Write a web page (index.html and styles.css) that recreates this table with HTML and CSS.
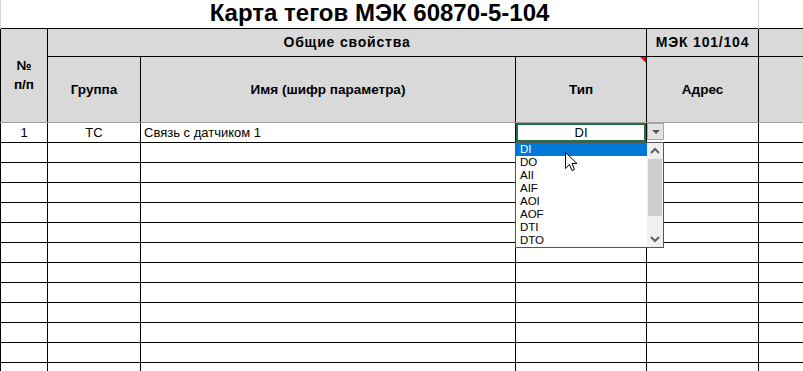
FILE: index.html
```html
<!DOCTYPE html>
<html lang="ru">
    <head>
        <meta charset="UTF-8">
        <meta name="viewport" content="width=device-width, initial-scale=1.0">
        <title>Карта тегов МЭК 60870-5-104</title>
        <link rel="stylesheet" href="styles.css">
    </head>
    <body>
        <div class="sheet-wrap">
            <table class="sheet">
                <colgroup>
                    <col class="c-num">
                    <col class="c-group">
                    <col class="c-name">
                    <col class="c-type">
                    <col class="c-addr">
                    <col class="c-rest">
                </colgroup>
                <tr class="title-row">
                    <td colspan="5" class="title">Карта тегов МЭК 60870-5-104</td>
                    <td class="empty"></td>
                </tr>
                <tr class="head-top">
                    <th rowspan="2" class="num-head">№<br>п/п</th>
                    <th colspan="3">Общие свойства</th>
                    <th>МЭК 101/104</th>
                    <th></th>
                </tr>
                <tr class="head-sub">
                    <th>Группа</th>
                    <th>Имя (шифр параметра)</th>
                    <th class="has-note">Тип</th>
                    <th>Адрес</th>
                    <th></th>
                </tr>
                <tr>
                    <td>1</td>
                    <td>ТС</td>
                    <td class="left">Связь с датчиком 1</td>
                    <td class="active">DI</td>
                    <td></td>
                    <td></td>
                </tr>
                <tr><td></td><td></td><td></td><td></td><td></td><td></td></tr>
                <tr><td></td><td></td><td></td><td></td><td></td><td></td></tr>
                <tr><td></td><td></td><td></td><td></td><td></td><td></td></tr>
                <tr><td></td><td></td><td></td><td></td><td></td><td></td></tr>
                <tr><td></td><td></td><td></td><td></td><td></td><td></td></tr>
                <tr><td></td><td></td><td></td><td></td><td></td><td></td></tr>
                <tr><td></td><td></td><td></td><td></td><td></td><td></td></tr>
                <tr><td></td><td></td><td></td><td></td><td></td><td></td></tr>
                <tr><td></td><td></td><td></td><td></td><td></td><td></td></tr>
                <tr><td></td><td></td><td></td><td></td><td></td><td></td></tr>
                <tr><td></td><td></td><td></td><td></td><td></td><td></td></tr>
                <tr><td></td><td></td><td></td><td></td><td></td><td></td></tr>
            </table>

            <!-- validation list for the "Тип" cell -->
            <div class="drop-btn"><span class="drop-arrow"></span></div>
            <div class="drop-list">
                <ul class="drop-items">
                    <li class="picked">DI</li>
                    <li>DO</li>
                    <li>AII</li>
                    <li>AIF</li>
                    <li>AOI</li>
                    <li>AOF</li>
                    <li>DTI</li>
                    <li>DTO</li>
                </ul>
                <div class="drop-scroll">
                    <svg class="chev" width="14" height="14" viewBox="0 0 14 14"><path d="M3 9 L7 5 L11 9" fill="none" stroke="#606060" stroke-width="2"/></svg>
                    <div class="thumb"></div>
                    <div class="track"></div>
                    <svg class="chev" width="14" height="14" viewBox="0 0 14 14"><path d="M3 5 L7 9 L11 5" fill="none" stroke="#606060" stroke-width="2"/></svg>
                </div>
            </div>

            <svg class="pointer" width="13" height="20" viewBox="0 0 13 20">
                <path d="M0.5 0.5 L0.5 16.5 L4.5 12.5 L7 18.5 L9.5 17.5 L7 11.5 L12 11.5 Z" fill="#fff" stroke="#000" stroke-width="1"/>
            </svg>
        </div>
    </body>
</html>
```

FILE: styles.css
```css
*{
    margin: 0;
    padding: 0;
    box-sizing: border-box;
}
html, body{
    overflow: hidden;
    background-color: #fff;
}
body{
    width: 803px;
    height: 371px;
    font-family: "Liberation Sans", Arial, sans-serif;
}
.sheet-wrap{
    position: relative;
    width: 803px;
    height: 371px;
    overflow: hidden;
}
.sheet{
    border-collapse: collapse;
    table-layout: fixed;
    width: 820px;
    font-size: 13px;
}
.c-num{ width: 47px; }
.c-group{ width: 93px; }
.c-name{ width: 375px; }
.c-type{ width: 131px; }
.c-addr{ width: 112px; }
.c-rest{ width: 62px; }

.sheet td, .sheet th{
    border: 1px solid #000;
    height: 20px;
    text-align: center;
    vertical-align: middle;
    color: #000;
    white-space: nowrap;
    overflow: hidden;
}
.sheet td.left{
    text-align: left;
    padding-left: 3px;
}

/* title line sits above the grid, only the pale gridlines show there */
.title-row td{
    height: 28px;
    border-top: none;
    border-bottom: none;
    border-left: 1px solid #d4d4d4;
    border-right: 1px solid #d4d4d4;
    font-size: 24px;
    line-height: 24px;
    font-weight: bold;
    padding-bottom: 2px;
}
.title-row td.empty{
    border-left: 1px solid #d4d4d4;
    border-right: none;
}

.sheet th{
    background-color: #d9d9d9;
    font-weight: bold;
    font-size: 13.5px;
    line-height: 19px;
}
.head-top th{
    height: 28px;
    font-size: 14px;
    letter-spacing: 0.8px;
}
.head-top th.num-head{
    font-size: 13.5px;
    letter-spacing: 0;
    border-bottom: 1px solid #a0a0a0;
}
.head-sub th{
    height: 66px;
    border-bottom: 1px solid #a0a0a0;
}
.has-note{
    position: relative;
}
.has-note::after{
    content: "";
    position: absolute;
    top: 0;
    right: 0;
    border-top: 6px solid #ff0000;
    border-left: 6px solid transparent;
}

.sheet td.active{
    box-shadow: inset 0 0 0 2px #217346;
}

/* dropdown button next to the active cell */
.drop-btn{
    position: absolute;
    left: 647px;
    top: 123px;
    width: 17px;
    height: 17px;
    background-color: #e3e3e3;
    border: 1px solid #a9a9a9;
    display: flex;
    align-items: center;
    justify-content: center;
}
.drop-arrow{
    width: 0;
    height: 0;
    border-left: 4px solid transparent;
    border-right: 4px solid transparent;
    border-top: 4px solid #555;
}

.drop-list{
    position: absolute;
    left: 515px;
    top: 142px;
    width: 149px;
    height: 106px;
    background-color: #fff;
    border: 1px solid #555;
    display: flex;
}
.drop-items{
    list-style: none;
    flex: 1;
    font-size: 11.5px;
    font-family: "Liberation Sans", Arial, sans-serif;
    color: #000;
}
.drop-items li{
    height: 13px;
    line-height: 13px;
    padding-left: 4px;
}
.drop-items li.picked{
    background-color: #0078d7;
    color: #fff;
}
.drop-scroll{
    width: 16px;
    background-color: #f0f0f0;
    display: flex;
    flex-direction: column;
    align-items: center;
}
.drop-scroll .chev{
    flex: none;
    margin: 1px 0;
}
.thumb{
    width: 14px;
    height: 57px;
    background-color: #cdcdcd;
}
.track{
    flex: 1;
}

.pointer{
    position: absolute;
    left: 565px;
    top: 152px;
}
```
